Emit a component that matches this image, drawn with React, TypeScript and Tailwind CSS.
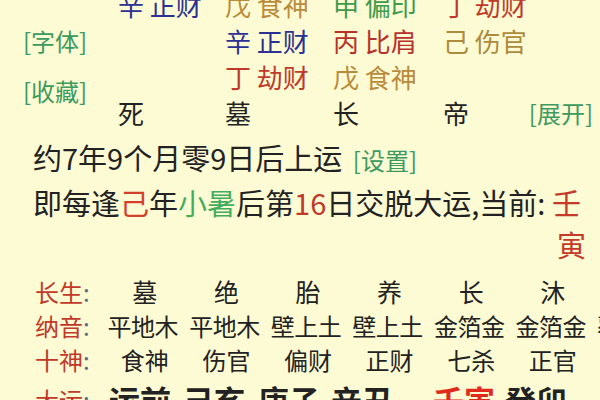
import React from 'react';

const FONT = { fontFamily: '"Noto Sans CJK SC", "Noto Sans", sans-serif' };

type Cell = { gan: string; shen: string; color: string } | null;

// pillar rows of the hidden-stem table (4 columns)
const stemRows: Cell[][] = [
  [
    { gan: '辛', shen: '正财', color: 'text-[#2b3192]' },
    { gan: '戊', shen: '食神', color: 'text-[#b98b3c]' },
    { gan: '申', shen: '偏印', color: 'text-[#3e9a4c]' },
    { gan: '丁', shen: '劫财', color: 'text-[#bf3a2c]' },
  ],
  [
    null,
    { gan: '辛', shen: '正财', color: 'text-[#2b3192]' },
    { gan: '丙', shen: '比肩', color: 'text-[#b8312c]' },
    { gan: '己', shen: '伤官', color: 'text-[#ad8b3e]' },
  ],
  [
    null,
    { gan: '丁', shen: '劫财', color: 'text-[#c0392b]' },
    { gan: '戊', shen: '食神', color: 'text-[#b98b3c]' },
    null,
  ],
];

const phases = ['死', '墓', '长', '帝'];

const changSheng = ['墓', '绝', '胎', '养', '长', '沐', '冠', '临'];
const naYin = ['平地木', '平地木', '壁上土', '壁上土', '金箔金', '金箔金', '覆灯火', '覆灯火'];
const shiShen = ['食神', '伤官', '偏财', '正财', '七杀', '正官', '偏印', '正印'];

const Label = ({ text }: { text: string }) => (
  <div className="w-[69px] shrink-0 text-[24px] text-[#c0392b]">
    {text}
    <span className="text-[#5d6b82]">:</span>
  </div>
);

const App = () => {
  return (
    <div className="w-[600px] h-[400px] overflow-hidden bg-[#fdfbd3] text-[#222]" style={FONT}>
      {/* PILLAR TABLE */}
      <div className="flex -mt-[13px]">
        <div className="w-[118px] shrink-0 pl-[23px] pt-[38px] text-[24px] text-[#3d9a5e] leading-[32px]">
          <div>[字体]</div>
          <div className="mt-[18px]">[收藏]</div>
        </div>
        <div className="flex-1 grid grid-cols-[107px_108px_110px_1fr] auto-rows-[36px] items-center text-[26px] leading-[36px]">
          {stemRows.map((row, r) =>
            row.map((c, i) => (
              <div key={`${r}-${i}`} className={`whitespace-nowrap ${c ? c.color : ''}`}>
                {c ? `${c.gan} ${c.shen}` : ''}
              </div>
            )),
          )}
          {phases.map((p, i) => (
            <div key={p} className={i === 3 ? 'flex items-center pr-[7px]' : ''}>
              <span>{p}</span>
              {i === 3 && <span className="ml-auto text-[24px] text-[#3d9a5e]">[展开]</span>}
            </div>
          ))}
        </div>
      </div>

      {/* START OF LUCK */}
      <div className="pl-[33px] mt-[5px] text-[29px] leading-[42px]">
        <div className="whitespace-nowrap">
          约7年9个月零9日后上运 <span className="ml-[4px] text-[24px] text-[#3d9a5e]">[设置]</span>
        </div>
        <div className="whitespace-nowrap">
          即每逢<span className="text-[#d2402c]">己</span>年<span className="text-[#43ad5e]">小暑</span>后第
          <span className="text-[#c0392b]">16</span>日交脱大运,当前: <span className="text-[#c43a2a]">壬</span>
        </div>
        <div className="pl-[524px] text-[#c43a2a]">寅</div>
      </div>

      {/* LUCK TABLE */}
      <div className="pl-[35px] mt-[10px] whitespace-nowrap">
        <div className="flex h-[34px] items-center">
          <Label text="长生" />
          {changSheng.map((v, i) => (
            <div key={i} className="w-[81.6px] shrink-0 text-center text-[25px]">{v}</div>
          ))}
        </div>
        <div className="flex h-[34px] items-center">
          <Label text="纳音" />
          {naYin.map((v, i) => (
            <div key={i} className="w-[81.6px] shrink-0 text-center text-[24px] tracking-[-0.5px] -translate-x-[2px]">{v}</div>
          ))}
        </div>
        <div className="flex h-[34px] items-center">
          <Label text="十神" />
          {shiShen.map((v, i) => (
            <div key={i} className="w-[81.6px] shrink-0 text-center text-[24px]">{v}</div>
          ))}
        </div>
        <div className="flex h-[40px] items-center mt-[3px]">
          <Label text="大运" />
          <div className="flex text-[31px] font-bold ml-[5px]">
            <span>运前</span>
            <span className="ml-[12px]">己亥</span>
            <span className="ml-[13px]">庚子</span>
            <span className="ml-[11px]">辛丑</span>
            <span className="ml-[40px] text-[#e02a1e]">壬寅</span>
            <span className="ml-[10px]">癸卯</span>
          </div>
        </div>
      </div>
    </div>
  );
};

export default App;
